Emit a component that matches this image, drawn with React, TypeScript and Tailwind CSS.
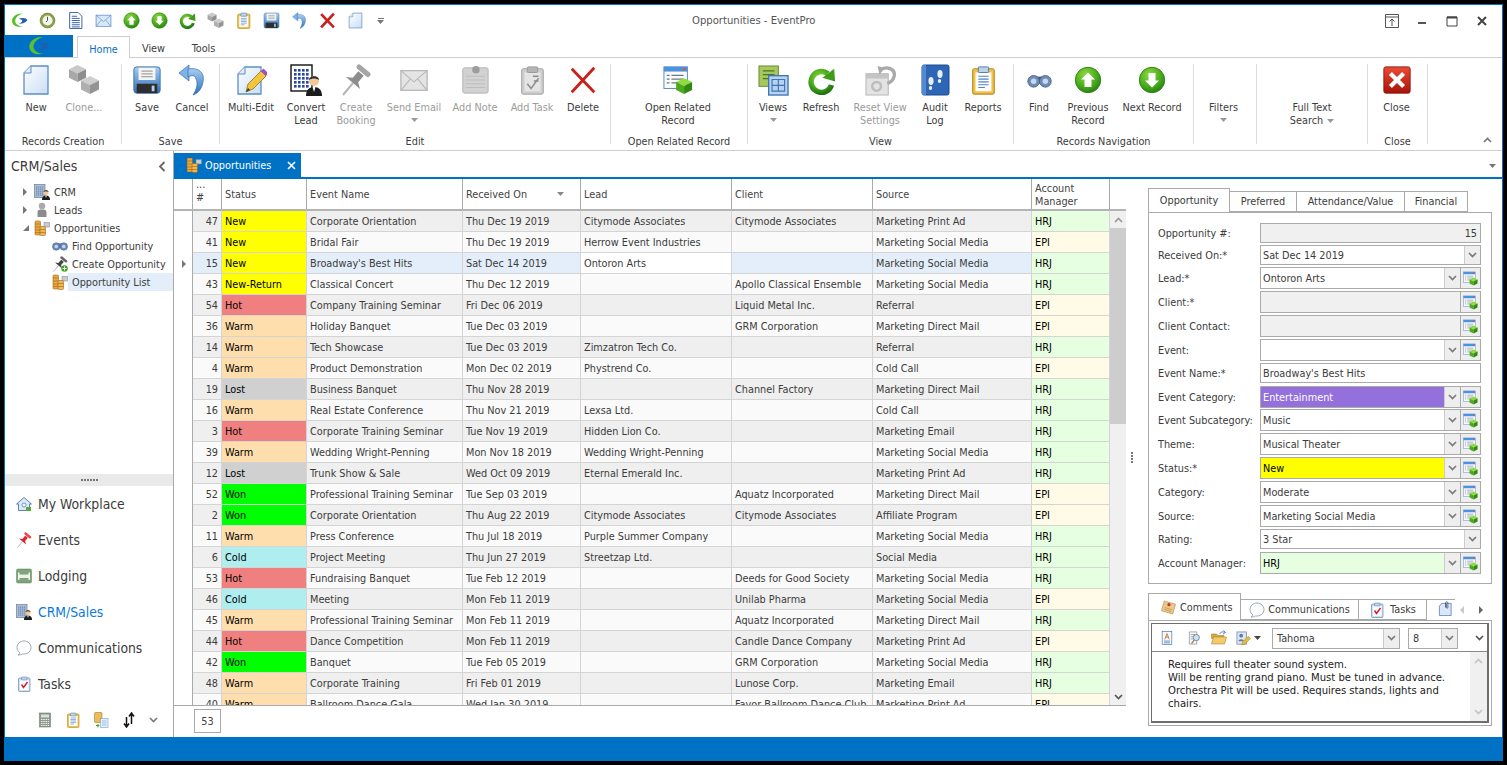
import React from "react";

type IP = { s?: number };
const Ic = ({ s = 32, children }: { s?: number; children: React.ReactNode }) => (
  <svg width={s} height={s} viewBox="0 0 32 32" className="block shrink-0">
    {children}
  </svg>
);

const Cube = ({ x, y, w, c }: { x: number; y: number; w: number; c: string[] }) => (
  <g>
    <polygon points={`${x + w / 2},${y} ${x + w},${y + w / 4} ${x + w / 2},${y + w / 2} ${x},${y + w / 4}`} fill={c[0]} />
    <polygon points={`${x},${y + w / 4} ${x + w / 2},${y + w / 2} ${x + w / 2},${y + w} ${x},${y + (3 * w) / 4}`} fill={c[1]} />
    <polygon points={`${x + w},${y + w / 4} ${x + w / 2},${y + w / 2} ${x + w / 2},${y + w} ${x + w},${y + (3 * w) / 4}`} fill={c[2]} />
  </g>
);

const Defs = () => (
  <svg width="0" height="0" className="absolute">
    <defs>
      <linearGradient id="pg" x1="0" y1="0" x2="1" y2="1">
        <stop offset="0" stopColor="#ffffff" />
        <stop offset="1" stopColor="#c9ddf5" />
      </linearGradient>
      <radialGradient id="grn" cx="0.4" cy="0.3" r="0.8">
        <stop offset="0" stopColor="#8fdc3c" />
        <stop offset="0.6" stopColor="#46a81c" />
        <stop offset="1" stopColor="#1f7410" />
      </radialGradient>
      <linearGradient id="blu" x1="0" y1="0" x2="0" y2="1">
        <stop offset="0" stopColor="#a9cdf2" />
        <stop offset="1" stopColor="#2f6fb8" />
      </linearGradient>
      <linearGradient id="redb" x1="0" y1="0" x2="0" y2="1">
        <stop offset="0" stopColor="#ee4a35" />
        <stop offset="1" stopColor="#a51408" />
      </linearGradient>
    </defs>
  </svg>
);

const Page = ({ s }: IP) => (
  <Ic s={s}>
    <path d="M11 2h17v28H4V9z" fill="url(#pg)" stroke="#5b8ec4" strokeWidth="1.3" />
    <path d="M11 2v7H4" fill="#e4eefa" stroke="#5b8ec4" strokeWidth="1" />
  </Ic>
);
const Cubes = ({ s }: IP) => (
  <Ic s={s}>
    <Cube x={1} y={1} w={17} c={["#c9c9c9", "#a8a8a8", "#8e8e8e"]} />
    <Cube x={13} y={12} w={18} c={["#cfcfcf", "#b0b0b0", "#949494"]} />
  </Ic>
);
const Floppy = ({ s }: IP) => (
  <Ic s={s}>
    <rect x="2" y="2" width="28" height="28" rx="3" fill="url(#blu)" stroke="#3a6ea8" />
    <rect x="7" y="3" width="18" height="13" fill="#f4f4f4" />
    <path d="M10 6.5h12M10 9.5h12M10 12.5h12" stroke="#888" />
    <rect x="5" y="20" width="22" height="10" fill="#2e2e2e" />
    <rect x="21" y="22" width="3" height="6" fill="#b8cfe8" />
  </Ic>
);
const Undo = ({ s }: IP) => (
  <Ic s={s}>
    <polygon points="3,9 13,1 13,17" fill="#7fb2e6" stroke="#2f6fb8" strokeWidth="0.7" />
    <path d="M12 5C23 3 29 9 27 18C26 24 23 29 17 31C21 25 22 19 20 15C19 11 16 11 12 13Z" fill="url(#blu)" stroke="#2f6fb8" strokeWidth="0.7" />
  </Ic>
);
const RedX = ({ s, w = 3 }: IP & { w?: number }) => (
  <Ic s={s}>
    <path d="M4 4L28 29M28 3L4 29" stroke="#cb1f1a" strokeWidth={w} />
  </Ic>
);
const GreenArrow = ({ s, down }: IP & { down?: boolean }) => (
  <Ic s={s}>
    <circle cx="16" cy="16" r="14.5" fill="url(#grn)" stroke="#2a7a12" />
    <path d="M16 7.5L24 15.5H20V24H12V15.5H8Z" fill="#fff" transform={down ? "rotate(180 16 16)" : undefined} />
  </Ic>
);
const Refresh = ({ s }: IP) => (
  <Ic s={s}>
    <path d="M23 8.5A11.5 11.5 0 1 0 27 21" fill="none" stroke="url(#grn)" strokeWidth="6" />
    <polygon points="17,13 31,17 30,3" fill="#3f9c18" />
  </Ic>
);
const Binoculars = ({ s }: IP) => (
  <Ic s={s}>
    <rect x="11" y="11" width="10" height="9" fill="#4d5d78" />
    <circle cx="8.5" cy="17" r="7.5" fill="#6d8cb8" stroke="#47597a" />
    <circle cx="23.5" cy="17" r="7.5" fill="#6d8cb8" stroke="#47597a" />
    <circle cx="8.5" cy="17" r="3.5" fill="#c6d8ef" />
    <circle cx="23.5" cy="17" r="3.5" fill="#c6d8ef" />
  </Ic>
);
const Envelope = ({ s, gray }: IP & { gray?: boolean }) => {
  const f = gray ? "#e4e4e4" : "#d8e8fa";
  const l = gray ? "#b8b8b8" : "#5b8ec4";
  return (
    <Ic s={s}>
      <rect x="2" y="6" width="28" height="21" fill={f} stroke={l} strokeWidth="1.4" />
      <path d="M2 6L16 18L30 6M2 27L12 15M30 27L20 15" fill="none" stroke={l} strokeWidth="1.2" />
    </Ic>
  );
};
const Pin = ({ s, red, plus }: IP & { red?: boolean; plus?: boolean }) => {
  const c = red ? "#d8262a" : plus ? "#444444" : "#8d8d8d";
  return (
    <Ic s={s}>
      <path d="M3 31L13 19" stroke="#b5b5b5" strokeWidth="2" />
      <path d="M6 13L20 25L18.2 18.2L23.7 11.7L18.3 7.3L12.8 13.8Z" fill={c} />
      <path d="M19 3L28 10.5" stroke={red ? "#f04848" : plus ? "#666666" : "#a5a5a5"} strokeWidth="5" strokeLinecap="round" />
      {plus && <circle cx="25" cy="25" r="6.5" fill="#3da51c" />}
      {plus && <path d="M25 21v8M21 25h8" stroke="#fff" strokeWidth="2" />}
    </Ic>
  );
};
const GrayNote = ({ s }: IP) => (
  <Ic s={s}>
    <rect x="3" y="3" width="27" height="27" rx="2" fill="#d2d2d2" stroke="#b2b2b2" />
    <path d="M6 12h21M6 16h21M6 20h21M6 24h21" stroke="#bdbdbd" />
    <circle cx="17" cy="5" r="4" fill="#9d9d9d" />
  </Ic>
);
const Clipboard = ({ s, mode }: IP & { mode: "gray" | "gold" | "red" | "plain" }) => {
  const b = mode === "gray" ? "#a9a9a9" : mode === "red" ? "#4d78a8" : "#b98a1c";
  const lines = mode === "gray" ? "#999" : "#4f86c6";
  return (
    <Ic s={s}>
      <rect x="5" y="4" width="23" height="27" rx="2" fill={mode === "gray" ? "#cfcfcf" : mode === "red" ? "#cfe0f2" : "#f0c24a"} stroke={b} strokeWidth="1.2" />
      <rect x="8" y="8" width="17" height="20" fill={mode === "gray" ? "#e5e5e5" : "#fdfdfd"} />
      <rect x="11" y="2" width="11" height="6" rx="1" fill={mode === "gray" ? "#b5b5b5" : "#b9d3ee"} stroke={mode === "gray" ? "#999" : "#4f79a8"} />
      {mode === "red" ? (
        <path d="M11 17L15 23L23 12" fill="none" stroke="#d0202a" strokeWidth="3" />
      ) : mode === "gray" ? (
        <path d="M11 20L15 25L23 14M17 12h6M18 17h5" fill="none" stroke="#8c8c8c" strokeWidth="1.6" />
      ) : (
        <path d="M11 12h11M11 15h11M11 18h11M11 21h11M11 24h7" stroke={lines} strokeWidth="1.2" />
      )}
    </Ic>
  );
};
const OpenRel = ({ s }: IP) => (
  <Ic s={s}>
    <rect x="1" y="2" width="25" height="23" fill="#fbfbfb" stroke="#4f86c6" />
    <rect x="1" y="2" width="25" height="5" fill="#4f92dc" />
    <rect x="21" y="3.5" width="3" height="2" fill="#e04b4b" />
    <path d="M4 11h3M9 11h13M4 15h3M9 15h13M4 19h3M9 19h10" stroke="#6a7a8c" strokeWidth="1.2" />
    <Cube x={14} y={14} w={17} c={["#8fdc3c", "#4fa81c", "#2f8a12"]} />
  </Ic>
);
const Views = ({ s }: IP) => (
  <Ic s={s}>
    <rect x="1" y="1" width="20" height="21" fill="#a5c95c" stroke="#6a8a32" />
    <path d="M5 6h12M5 10h12M5 14h12" stroke="#55702a" strokeWidth="1.4" />
    <rect x="11" y="11" width="20" height="20" fill="#b7d3f1" stroke="#3f74b5" strokeWidth="1.4" />
    <path d="M14.5 15h13v12h-13zM14.5 21h13M21 15v12" fill="none" stroke="#3f74b5" strokeWidth="1.2" />
  </Ic>
);
const ResetView = ({ s }: IP) => (
  <Ic s={s}>
    <rect x="1" y="9" width="23" height="22" fill="#e3e3e3" stroke="#b5b5b5" />
    <rect x="1" y="9" width="23" height="5" fill="#c4c4c4" />
    <circle cx="12" cy="22" r="4.5" fill="none" stroke="#bdbdbd" strokeWidth="2.6" />
    <path d="M15 6C22 0 32 4 30 12C29 16 26 18 23 19" fill="none" stroke="#a9a9a9" strokeWidth="3.4" />
    <polygon points="13,1 20,3 15,10" fill="#a9a9a9" />
  </Ic>
);
const Audit = ({ s }: IP) => (
  <Ic s={s}>
    <rect x="3" y="1" width="27" height="30" rx="2" fill="#2c66b5" stroke="#1d4d8f" />
    <rect x="3" y="1" width="4" height="30" fill="#5489cf" />
    <ellipse cx="12" cy="17" rx="2.6" ry="4" fill="#e8eef6" />
    <ellipse cx="11.5" cy="24" rx="1.7" ry="2" fill="#e8eef6" />
    <ellipse cx="21" cy="10" rx="2.6" ry="4" fill="#e8eef6" />
    <ellipse cx="20.5" cy="17" rx="1.7" ry="2" fill="#e8eef6" />
  </Ic>
);
const CloseBtn = ({ s }: IP) => (
  <Ic s={s}>
    <rect x="2" y="2" width="28" height="28" rx="2" fill="url(#redb)" stroke="#8f140a" />
    <path d="M9 9L23 23M23 9L9 23" stroke="#fff" strokeWidth="4.5" />
  </Ic>
);
const MultiEdit = ({ s }: IP) => (
  <Ic s={s}>
    <path d="M10 3h16v27H3V10z" fill="url(#pg)" stroke="#5b8ec4" strokeWidth="1.3" />
    <path d="M10 3v7H3" fill="#e4eefa" stroke="#5b8ec4" />
    <path d="M11 28L13 20L26 7L31 12L18 25Z" fill="#f1c63c" stroke="#7a6420" strokeWidth="0.7" />
    <path d="M26 7L28.5 4.5L33 9L31 12Z" fill="#a64bc4" />
    <path d="M11 28L13 24L15 26Z" fill="#333" />
  </Ic>
);
const BuildingPerson = ({ s, dark }: IP & { dark?: boolean }) => (
  <Ic s={s}>
    <rect x="1" y="1" width="21" height="26" fill={dark ? "#fff" : "#aebfd6"} stroke={dark ? "#111" : "#6c7c94"} strokeWidth="1.4" />
    {[4, 8, 12, 16].map((x) =>
      [5, 9, 13, 17, 21].map((y) => <rect key={x * 100 + y} x={x} y={y} width="2.6" height="2.6" fill={dark ? "#2747a8" : "#6f8ab5"} />)
    )}
    <circle cx="24" cy="17" r="5" fill="#f3c79a" />
    <path d="M19 16C19 11 29 11 29 16C26 14 22 14 19 16Z" fill="#2a2a2a" />
    <path d="M16 32C16 25 20 23 24 23C28 23 32 25 32 32Z" fill="#1c1c1c" />
    <path d="M22.5 23L24 28L25.5 23Z" fill="#fff" />
  </Ic>
);
const Person = ({ s }: IP) => (
  <Ic s={s}>
    <circle cx="16" cy="8" r="6.5" fill="#a9a9a9" />
    <path d="M7 30V20C7 16 11 15 16 15C21 15 25 16 25 20V30Z" fill="#8b8b8b" />
  </Ic>
);
const Coins = ({ s }: IP) => (
  <Ic s={s}>
    <rect x="20" y="5" width="11" height="9" fill="#c8ccd2" stroke="#7a7e88" />
    <rect x="2" y="2" width="11" height="28" rx="2" fill="#eda83c" stroke="#8d5a14" />
    <path d="M2 8h11M2 14h11M2 20h11M2 25h11" stroke="#8d5a14" />
    <rect x="12" y="13" width="11" height="18" rx="2" fill="#f1b64c" stroke="#8d5a14" />
    <path d="M12 19h11M12 25h11" stroke="#8d5a14" />
  </Ic>
);
const House = ({ s }: IP) => (
  <Ic s={s}>
    <path d="M16 3L31 16H27V29H5V16H1Z" fill="#dce9f7" stroke="#4a78ae" strokeWidth="1.8" />
    <rect x="12" y="14" width="8" height="8" rx="4" fill="#fff" stroke="#4a78ae" strokeWidth="1.5" />
    <rect x="20" y="22" width="10" height="8" fill="#5aa83a" />
  </Ic>
);
const Bed = ({ s }: IP) => (
  <Ic s={s}>
    <rect x="1" y="2" width="30" height="28" rx="3" fill="#7fa37a" stroke="#5b7d58" />
    <rect x="6" y="13" width="20" height="7" fill="#eef2ea" />
    <rect x="4" y="9" width="3" height="15" fill="#eef2ea" />
    <rect x="25" y="9" width="3" height="15" fill="#eef2ea" />
  </Ic>
);
const Bubble = ({ s }: IP) => (
  <Ic s={s}>
    <path d="M16 2C8 2 2 8 2 15C2 20 5 24 8 26C7 28 6 29 4 30C8 30 11 29 13 28C14 28 15 28 16 28C24 28 30 22 30 15C30 8 24 2 16 2Z" fill="#fff" stroke="#7d8ea2" strokeWidth="1.5" />
  </Ic>
);
const Clock = ({ s }: IP) => (
  <Ic s={s}>
    <circle cx="16" cy="16" r="14" fill="#8aa04c" stroke="#5c6f2c" />
    <circle cx="16" cy="16" r="9.5" fill="#f4f4ea" />
    <path d="M16 9v7l-3 3" fill="none" stroke="#333" strokeWidth="1.6" />
  </Ic>
);
const DocLines = ({ s }: IP) => (
  <Ic s={s}>
    <path d="M5 1h16l7 7v23H5z" fill="#fff" stroke="#1f4d96" strokeWidth="1.6" />
    <path d="M9 8h10M9 12h15M9 16h15M9 20h15M9 24h15M9 28h15" stroke="#1f4d96" strokeWidth="1.6" />
  </Ic>
);
const EPLogo = ({ s }: IP) => (
  <Ic s={s}>
    <path d="M21 3C10 2 1 10 2 18C3 26 13 30 22 27C15 27 8 23 8 17C8 11 14 6 21 3Z" fill="#5cc02c" />
    <path d="M14 13C20 10 29 11 31 15C28 20 21 23 14 22C19 21 22 18 21 15C19 14 16 13 14 13Z" fill="#1f5fae" />
  </Ic>
);
const Calc = ({ s }: IP) => (
  <Ic s={s}>
    <rect x="5" y="2" width="22" height="28" fill="#8f9a8f" stroke="#5f6a5f" />
    <rect x="8" y="5" width="16" height="6" fill="#d9e2d9" />
    <path d="M8 15h16M8 19h16M8 23h16M8 27h16" stroke="#eee" strokeWidth="2" strokeDasharray="3 1.5" />
  </Ic>
);
const CopyDoc = ({ s }: IP) => (
  <Ic s={s}>
    <rect x="3" y="1" width="15" height="20" rx="2" fill="#eebb58" stroke="#8d6a20" />
    <rect x="15" y="13" width="15" height="18" fill="#e6f0fb" stroke="#5b8ec4" />
    <path d="M18 18h9M18 22h9M18 26h9" stroke="#5b8ec4" />
    <path d="M6 27h7M10 24v7" stroke="#3da51c" strokeWidth="2" />
  </Ic>
);
const SortArrows = ({ s }: IP) => (
  <Ic s={s}>
    <path d="M11 10V28M6 23L11 30L16 23M21 24V4M16 9L21 2L26 9" fill="none" stroke="#111" strokeWidth="3" />
  </Ic>
);
const FontDoc = ({ s }: IP) => (
  <Ic s={s}>
    <rect x="5" y="1" width="22" height="30" fill="#f5f8fc" stroke="#4f79b8" strokeWidth="1.6" />
    <path d="M11 19L16 6L21 19M13 14h6" fill="none" stroke="#c8702a" strokeWidth="2" />
    <path d="M9 23h14M9 27h14" stroke="#4f79b8" strokeWidth="1.8" />
  </Ic>
);
const DocSearch = ({ s }: IP) => (
  <Ic s={s}>
    <path d="M3 2h17v28H3z" fill="#f7f7f7" stroke="#7b8a9c" strokeWidth="1.5" />
    <path d="M6 8h10M6 13h6M6 18h6" stroke="#7b8a9c" strokeWidth="1.5" />
    <circle cx="19" cy="15" r="7" fill="#cfe3f7" stroke="#6a7a8c" strokeWidth="2" />
    <path d="M14 21L8 29" stroke="#a87a3c" strokeWidth="3" />
  </Ic>
);
const Folder = ({ s }: IP) => (
  <Ic s={s}>
    <path d="M1 8h10l3 3h12v6H1z" fill="#d9a640" stroke="#9a7420" />
    <path d="M1 28L5 14H31L27 28Z" fill="#f3cb6a" stroke="#9a7420" />
    <path d="M17 8C20 3 25 3 28 5M25 1L29 5L24 8" fill="none" stroke="#4f86c6" strokeWidth="2" />
  </Ic>
);
const SigEdit = ({ s }: IP) => (
  <Ic s={s}>
    <rect x="2" y="2" width="20" height="26" fill="#dfe7f2" stroke="#6a7fa0" strokeWidth="1.5" />
    <circle cx="11" cy="10" r="4" fill="#5f7aa6" />
    <path d="M5 22C5 16 17 16 17 22Z" fill="#5f7aa6" />
    <path d="M12 30L14 23L26 11L31 16L19 28Z" fill="#e8b93a" stroke="#7a6420" strokeWidth="0.7" />
  </Ic>
);
const CommentNote = ({ s }: IP) => (
  <Ic s={s}>
    <path d="M7 2L31 9L25 30L1 23Z" fill="#e9c98c" stroke="#a9803c" strokeWidth="1.2" />
    <circle cx="17" cy="10" r="3.5" fill="#c8352c" />
    <path d="M8 16L24 21M7 20L22 25" stroke="#b08c4c" strokeWidth="1.4" />
  </Ic>
);
const Attach = ({ s }: IP) => (
  <Ic s={s}>
    <path d="M8 5h20v26H3V11z" fill="#d9e8f8" stroke="#4f79b8" strokeWidth="1.6" />
    <path d="M16 14V4C16 1 21 1 21 4V14C21 16 18 16 18 14V6" fill="none" stroke="#335" strokeWidth="1.4" />
  </Ic>
);

const Chev = ({ c = "#7a7a7a", up }: { c?: string; up?: boolean }) => (
  <svg width="9" height="6" viewBox="0 0 9 6" className={up ? "block rotate-180" : "block"}>
    <path d="M1 1L4.5 4.5L8 1" fill="none" stroke={c} strokeWidth="1.7" />
  </svg>
);
const Tri = ({ c = "#999" }: { c?: string }) => (
  <svg width="7" height="4" viewBox="0 0 7 4" className="block shrink-0">
    <path d="M0 0H7L3.5 4Z" fill={c} />
  </svg>
);

const qat = [
  <EPLogo s={17} />, <Clock s={17} />, <DocLines s={17} />, <Envelope s={17} />, <GreenArrow s={17} />, <GreenArrow s={17} down />,
  <Refresh s={17} />, <Cubes s={17} />, <Clipboard s={17} mode="gold" />, <Floppy s={17} />, <Undo s={17} />, <RedX s={17} w={5} />, <Page s={17} />,
];

type Btn = { w: number; icon?: React.ReactNode; l: string; l2?: string; dis?: boolean; arrow?: boolean; inlineArrow?: boolean };
type Group = { w: number; pl: number; label?: string; btns: Btn[] };
const groups: Group[] = [
  { w: 117, pl: 7, label: "Records Creation", btns: [
    { w: 48, icon: <Page />, l: "New" },
    { w: 48, icon: <Cubes />, l: "Clone...", dis: true },
  ] },
  { w: 98, pl: 3, label: "Save", btns: [
    { w: 44, icon: <Floppy s={30} />, l: "Save" },
    { w: 46, icon: <Undo />, l: "Cancel" },
  ] },
  { w: 391, pl: 4, label: "Edit", btns: [
    { w: 54, icon: <MultiEdit />, l: "Multi-Edit" },
    { w: 56, icon: <BuildingPerson dark />, l: "Convert", l2: "Lead" },
    { w: 44, icon: <Pin />, l: "Create", l2: "Booking", dis: true },
    { w: 72, icon: <Envelope gray s={30} />, l: "Send Email", dis: true, arrow: true },
    { w: 50, icon: <GrayNote s={30} />, l: "Add Note", dis: true },
    { w: 64, icon: <Clipboard mode="gray" s={30} />, l: "Add Task", dis: true },
    { w: 38, icon: <RedX s={30} />, l: "Delete" },
  ] },
  { w: 137, pl: 0, label: "Open Related Record", btns: [{ w: 134, icon: <OpenRel s={30} />, l: "Open Related", l2: "Record" }] },
  { w: 266, pl: 0, label: "View", btns: [
    { w: 50, icon: <Views s={31} />, l: "Views", arrow: true },
    { w: 46, icon: <Refresh s={29} />, l: "Refresh" },
    { w: 72, icon: <ResetView s={31} />, l: "Reset View", l2: "Settings", dis: true },
    { w: 38, icon: <Audit />, l: "Audit", l2: "Log" },
    { w: 58, icon: <Clipboard mode="plain" s={30} />, l: "Reports" },
  ] },
  { w: 180, pl: 0, label: "Records Navigation", btns: [
    { w: 50, icon: <Binoculars s={25} />, l: "Find" },
    { w: 48, icon: <GreenArrow s={28} />, l: "Previous", l2: "Record" },
    { w: 80, icon: <GreenArrow s={28} down />, l: "Next Record" },
  ] },
  { w: 63, pl: 0, btns: [{ w: 59, l: "Filters", arrow: true }] },
  { w: 111, pl: 0, btns: [{ w: 110, l: "Full Text", l2: "Search", inlineArrow: true }] },
  { w: 60, pl: 0, label: "Close", btns: [{ w: 57, icon: <CloseBtn s={30} />, l: "Close" }] },
];

type Row = [number, string, string, string, string, string, string, string];
const rows: Row[] = [
  [47, "New", "Corporate Orientation", "Thu Dec 19 2019", "Citymode Associates", "Citymode Associates", "Marketing Print Ad", "HRJ"],
  [41, "New", "Bridal Fair", "Thu Dec 19 2019", "Herrow Event Industries", "", "Marketing Social Media", "EPI"],
  [15, "New", "Broadway's Best Hits", "Sat Dec 14 2019", "Ontoron Arts", "", "Marketing Social Media", "HRJ"],
  [43, "New-Return", "Classical Concert", "Thu Dec 12 2019", "", "Apollo Classical Ensemble", "Marketing Social Media", "HRJ"],
  [54, "Hot", "Company Training Seminar", "Fri Dec 06 2019", "", "Liquid Metal Inc.", "Referral", "EPI"],
  [36, "Warm", "Holiday Banquet", "Tue Dec 03 2019", "", "GRM Corporation", "Marketing Direct Mail", "EPI"],
  [14, "Warm", "Tech Showcase", "Tue Dec 03 2019", "Zimzatron Tech Co.", "", "Referral", "HRJ"],
  [4, "Warm", "Product Demonstration", "Mon Dec 02 2019", "Phystrend Co.", "", "Cold Call", "EPI"],
  [19, "Lost", "Business Banquet", "Thu Nov 28 2019", "", "Channel Factory", "Marketing Direct Mail", "HRJ"],
  [16, "Warm", "Real Estate Conference", "Thu Nov 21 2019", "Lexsa Ltd.", "", "Cold Call", "HRJ"],
  [3, "Hot", "Corporate Training Seminar", "Tue Nov 19 2019", "Hidden Lion Co.", "", "Marketing Email", "HRJ"],
  [39, "Warm", "Wedding Wright-Penning", "Mon Nov 18 2019", "Wedding Wright-Penning", "", "Marketing Social Media", "HRJ"],
  [12, "Lost", "Trunk Show & Sale", "Wed Oct 09 2019", "Eternal Emerald Inc.", "", "Marketing Print Ad", "HRJ"],
  [52, "Won", "Professional Training Seminar", "Tue Sep 03 2019", "", "Aquatz Incorporated", "Marketing Direct Mail", "EPI"],
  [2, "Won", "Corporate Orientation", "Thu Aug 22 2019", "Citymode Associates", "Citymode Associates", "Affiliate Program", "EPI"],
  [11, "Warm", "Press Conference", "Thu Jul 18 2019", "Purple Summer Company", "", "Marketing Social Media", "HRJ"],
  [6, "Cold", "Project Meeting", "Thu Jun 27 2019", "Streetzap Ltd.", "", "Social Media", "HRJ"],
  [53, "Hot", "Fundraising Banquet", "Tue Feb 12 2019", "", "Deeds for Good Society", "Marketing Social Media", "HRJ"],
  [46, "Cold", "Meeting", "Mon Feb 11 2019", "", "Unilab Pharma", "Marketing Social Media", "EPI"],
  [45, "Warm", "Professional Training Seminar", "Mon Feb 11 2019", "", "Aquatz Incorporated", "Marketing Direct Mail", "HRJ"],
  [44, "Hot", "Dance Competition", "Mon Feb 11 2019", "", "Candle Dance Company", "Marketing Print Ad", "EPI"],
  [42, "Won", "Banquet", "Tue Feb 05 2019", "", "GRM Corporation", "Marketing Social Media", "HRJ"],
  [48, "Warm", "Corporate Training", "Fri Feb 01 2019", "", "Lunose Corp.", "Marketing Email", "HRJ"],
  [40, "Warm", "Ballroom Dance Gala", "Wed Jan 30 2019", "", "Favor Ballroom Dance Club", "Marketing Print Ad", "EPI"],
];

const statusBg: Record<string, string> = {
  New: "bg-[#ffff00]",
  "New-Return": "bg-[#ffff00]",
  Hot: "bg-[#f08080]",
  Warm: "bg-[#ffdead]",
  Lost: "bg-[#d0d0d0]",
  Won: "bg-[#00ff00]",
  Cold: "bg-[#afeeee]",
};

const Cell = ({ w, className = "", children }: { w: string; className?: string; children?: React.ReactNode }) => (
  <div className={`${w} shrink-0 h-full border-r border-[#d4d4d4] pl-[3px] flex items-center whitespace-nowrap overflow-hidden ${className}`}>{children}</div>
);

const Grid = () => (
  <div className="h-[527px] flex flex-col border-b border-[#aaaaaa]">
    <div className="flex h-[32px] shrink-0 border-b-2 border-[#b4b4b4] text-[#444444]">
      <div className="w-[19px] border-r border-[#aaaaaa]" />
      <div className="w-[29px] border-r border-[#aaaaaa] pl-[3px] pt-[3px] leading-[12px]">
        <div className="h-[10px] leading-[6px]">...</div>
        <div>#</div>
      </div>
      <div className="w-[85px] border-r border-[#aaaaaa] pl-[3px] flex items-center">Status</div>
      <div className="w-[156px] border-r border-[#aaaaaa] pl-[3px] flex items-center">Event Name</div>
      <div className="w-[118px] border-r border-[#aaaaaa] pl-[3px] pr-[16px] flex items-center justify-between">
        Received On
        <Tri c="#888888" />
      </div>
      <div className="w-[151px] border-r border-[#aaaaaa] pl-[3px] flex items-center">Lead</div>
      <div className="w-[141px] border-r border-[#aaaaaa] pl-[3px] flex items-center">Client</div>
      <div className="w-[159px] border-r border-[#aaaaaa] pl-[3px] flex items-center">Source</div>
      <div className="w-[78px] border-r border-[#aaaaaa] pl-[3px] pt-[2px] flex items-center leading-[13px]">
        Account
        <br />
        Manager
      </div>
    </div>
    <div className="flex flex-1 min-h-0">
      <div className="w-[19px] border-r border-[#aaaaaa] shrink-0">
        {rows.map((r) => (
          <div key={r[0]} className="h-[21px] flex items-center pl-[8px]">
            {r[0] === 15 && <div className="w-0 h-0 border-y-[4px] border-y-transparent border-l-[4px] border-l-[#777777]" />}
          </div>
        ))}
      </div>
      <div className="w-[917px] shrink-0 overflow-hidden text-[#3c3c3c]">
        {rows.map((r, i) => {
          const sel = r[0] === 15;
          const bg = sel ? "bg-[#e3eefa]" : i % 2 === 0 ? "bg-[#efefef]" : "bg-[#fafafa]";
          return (
            <div key={r[0]} className={`flex h-[21px] border-b border-[#d4d4d4] ${bg}`}>
              <Cell w="w-[29px]" className="justify-end pr-[3px]">{r[0]}</Cell>
              <Cell w="w-[85px]" className={`${statusBg[r[1]]} text-black`}>{r[1]}</Cell>
              <Cell w="w-[156px]">{r[2]}</Cell>
              <Cell w="w-[118px]">{r[3]}</Cell>
              <Cell w="w-[151px]" className={sel ? "bg-white" : ""}>{r[4]}</Cell>
              <Cell w="w-[141px]">{r[5]}</Cell>
              <Cell w="w-[159px]">{r[6]}</Cell>
              <Cell w="w-[78px]" className={`${r[7] === "HRJ" ? "bg-[#e6ffe0]" : "bg-[#fffbe6]"} text-black`}>{r[7]}</Cell>
            </div>
          );
        })}
      </div>
      <div className="w-[16px] shrink-0 flex flex-col bg-[#f0f0f0]">
        <div className="h-[17px] flex items-center justify-center"><Chev c="#9a9a9a" up /></div>
        <div className="h-[196px] bg-[#cdcdcd]" />
        <div className="flex-1" />
        <div className="h-[17px] flex items-center justify-center"><Chev c="#555555" /></div>
      </div>
    </div>
  </div>
);

type Field = { label: string; row: string; box: string; value?: string; kind: "text" | "ro" | "date" | "combo" | "add"; right?: boolean; bg?: string };
const fields: Field[] = [
  { label: "Opportunity #:", row: "h-[22px]", box: "h-[20px]", value: "15", kind: "ro", right: true, bg: "bg-[#f0f0f0]" },
  { label: "Received On:*", row: "h-[22px]", box: "h-[20px]", value: "Sat Dec 14 2019", kind: "date" },
  { label: "Lead:*", row: "h-[24px]", box: "h-[22px]", value: "Ontoron Arts", kind: "combo" },
  { label: "Client:*", row: "h-[24px]", box: "h-[22px]", kind: "add", bg: "bg-[#f0f0f0]" },
  { label: "Client Contact:", row: "h-[24px]", box: "h-[22px]", kind: "add", bg: "bg-[#f0f0f0]" },
  { label: "Event:", row: "h-[24px]", box: "h-[22px]", kind: "combo" },
  { label: "Event Name:*", row: "h-[23px]", box: "h-[20px]", value: "Broadway's Best Hits", kind: "text" },
  { label: "Event Category:", row: "h-[23px]", box: "h-[22px]", value: "Entertainment", kind: "combo", bg: "bg-[#9370db] text-white" },
  { label: "Event Subcategory:", row: "h-[24px]", box: "h-[22px]", value: "Music", kind: "combo" },
  { label: "Theme:", row: "h-[24px]", box: "h-[22px]", value: "Musical Theater", kind: "combo" },
  { label: "Status:*", row: "h-[24px]", box: "h-[22px]", value: "New", kind: "combo", bg: "bg-[#ffff00] text-black" },
  { label: "Category:", row: "h-[24px]", box: "h-[22px]", value: "Moderate", kind: "combo" },
  { label: "Source:", row: "h-[24px]", box: "h-[22px]", value: "Marketing Social Media", kind: "combo" },
  { label: "Rating:", row: "h-[23px]", box: "h-[20px]", value: "3 Star", kind: "date" },
  { label: "Account Manager:", row: "h-[24px]", box: "h-[22px]", value: "HRJ", kind: "combo", bg: "bg-[#e6ffe0] text-black" },
];

const FormRow = ({ f }: { f: Field }) => (
  <div className={`${f.row} flex items-start`}>
    <div className={`${f.box} w-[102px] shrink-0 flex items-center whitespace-nowrap text-[#3c3c3c]`}>{f.label}</div>
    <div className={`${f.box} w-[221px] flex border border-[#aaaaaa] text-[#3c3c3c]`}>
      <div className={`flex-1 min-w-0 px-[2px] flex items-center whitespace-nowrap ${f.right ? "justify-end pr-[3px]" : ""} ${f.bg ?? "bg-white"}`}>
        {f.value}
      </div>
      {(f.kind === "combo" || f.kind === "date") && (
        <div className="w-[16px] bg-[#eeeeee] border-l border-[#cccccc] flex items-center justify-center"><Chev /></div>
      )}
      {(f.kind === "combo" || f.kind === "add") && (
        <div className="w-[20px] bg-[#eeeeee] border-l border-[#aaaaaa] flex items-center justify-center"><OpenRel s={15} /></div>
      )}
    </div>
  </div>
);

const TabBtn = ({ active, w, children }: { active?: boolean; w: string; children: React.ReactNode }) => (
  <div className={`${w} shrink-0 border border-[#aaaaaa] bg-white flex items-center justify-center text-[#3c3c3c] ${active ? "h-[24px] border-b-0 relative z-10" : "h-[21px] border-l-0"}`}>
    {children}
  </div>
);

const tree = [
  { t: "CRM", icon: <BuildingPerson s={16} />, lvl: 0, arrow: "closed" },
  { t: "Leads", icon: <Person s={16} />, lvl: 0, arrow: "closed" },
  { t: "Opportunities", icon: <Coins s={16} />, lvl: 0, arrow: "open" },
  { t: "Find Opportunity", icon: <Binoculars s={16} />, lvl: 1 },
  { t: "Create Opportunity", icon: <Pin s={16} plus />, lvl: 1 },
  { t: "Opportunity List", icon: <Coins s={16} />, lvl: 1, sel: true },
];

const nav = [
  { t: "My Workplace", icon: <House s={16} /> },
  { t: "Events", icon: <Pin s={16} red /> },
  { t: "Lodging", icon: <Bed s={16} /> },
  { t: "CRM/Sales", icon: <BuildingPerson s={16} />, on: true },
  { t: "Communications", icon: <Bubble s={16} /> },
  { t: "Tasks", icon: <Clipboard s={16} mode="red" /> },
];

const Sidebar = () => (
  <div className="w-[169px] shrink-0 border-r border-[#aaaaaa] flex flex-col">
    <div className="h-[32px] shrink-0 flex items-center justify-between pl-[6px] pr-[7px] pb-[2px] text-[14px] text-[#3c3c3c]">
      CRM/Sales
      <svg width="8" height="11" viewBox="0 0 8 11"><path d="M6.5 1L2 5.5L6.5 10" fill="none" stroke="#666" strokeWidth="1.8" /></svg>
    </div>
    <div className="flex-1 text-[#3c3c3c]">
      {tree.map((n) => (
        <div key={n.t} className={`h-[18px] flex items-center ${n.lvl ? "pl-[47px]" : "pl-[18px]"}`}>
          {n.lvl === 0 && (
            <div className="w-[11px] shrink-0">
              {n.arrow === "closed" ? (
                <div className="w-0 h-0 border-y-[4px] border-y-transparent border-l-[4px] border-l-[#777777]" />
              ) : (
                <div className="w-0 h-0 border-b-[6px] border-b-[#777777] border-l-[6px] border-l-transparent" />
              )}
            </div>
          )}
          {n.icon}
          <div className={`pl-[4px] h-full flex items-center flex-1 whitespace-nowrap ${n.sel ? "bg-[#e3eefa]" : ""}`}>{n.t}</div>
        </div>
      ))}
    </div>
    <div className="h-[12px] shrink-0 bg-[#e9e9e9] flex items-center justify-center gap-[1px]">
      {[0, 1, 2, 3, 4, 5].map((i) => (
        <div key={i} className="w-[2px] h-[2px] bg-[#777777]" />
      ))}
    </div>
    <div className="h-[216px] shrink-0">
      {nav.map((n) => (
        <div key={n.t} className={`h-[36px] flex items-center pl-[11px] gap-[6px] text-[13.8px] ${n.on ? "text-[#0a7ad8]" : "text-[#3c3c3c]"}`}>
          {n.icon}
          {n.t}
        </div>
      ))}
    </div>
    <div className="h-[35px] shrink-0 flex items-center pl-[32px]">
      <div className="w-[28px]"><Calc s={16} /></div>
      <div className="w-[28px]"><Clipboard s={16} mode="gold" /></div>
      <div className="w-[28px]"><CopyDoc s={16} /></div>
      <div className="w-[28px]"><SortArrows s={16} /></div>
      <Chev />
    </div>
  </div>
);

const Comments = () => (
  <div className="h-[106px] border border-[#aaaaaa] p-[2px]">
    <div className="h-full border-2 border-[#6e6e6e] border-t border-l flex flex-col">
      <div className="h-[28px] shrink-0 border-b border-[#8a8a8a] flex items-center pt-[1px]">
        <div className="w-[29px] pl-[8px]"><FontDoc s={14} /></div>
        <div className="w-[26px] pl-[7px]"><DocSearch s={14} /></div>
        <div className="w-[25px] pl-[4px]"><Folder s={16} /></div>
        <div className="w-[33px] pl-[4px] flex items-center gap-[3px]"><SigEdit s={15} /><Tri c="#444444" /></div>
        <div className="ml-[7px] w-[128px] h-[21px] border border-[#aaaaaa] flex text-[#3c3c3c]">
          <div className="flex-1 pl-[4px] flex items-center">Tahoma</div>
          <div className="w-[16px] bg-[#eeeeee] border-l border-[#cccccc] flex items-center justify-center"><Chev /></div>
        </div>
        <div className="ml-[8px] w-[50px] h-[21px] border border-[#aaaaaa] flex text-[#3c3c3c]">
          <div className="flex-1 pl-[4px] flex items-center">8</div>
          <div className="w-[16px] bg-[#eeeeee] border-l border-[#cccccc] flex items-center justify-center"><Chev /></div>
        </div>
        <div className="ml-auto pr-[3px]"><Chev c="#555555" /></div>
      </div>
      <div className="flex flex-1 min-h-0">
        <div className="flex-1 pl-[16px] pt-[6px] text-[11.2px] leading-[13px] text-[#222222]">
          Requires full theater sound system.
          <br />
          Will be renting grand piano. Must be tuned in advance.
          <br />
          Orchestra Pit will be used. Requires stands, lights and
          <br />
          chairs.
        </div>
        <div className="w-[17px] shrink-0 bg-[#f0f0f0] flex flex-col items-center justify-between py-[6px]">
          <Chev c="#c4c4c4" up />
          <Chev c="#c4c4c4" />
        </div>
      </div>
    </div>
  </div>
);

const RightPanel = () => (
  <div className="w-[344px] shrink-0 pt-[10px]">
    <div className="flex items-end h-[23px]">
      <TabBtn active w="w-[82px]">Opportunity</TabBtn>
      <TabBtn w="w-[67px]">Preferred</TabBtn>
      <TabBtn w="w-[108px]">Attendance/Value</TabBtn>
      <TabBtn w="w-[63px]">Financial</TabBtn>
    </div>
    <div className="h-[372px] border border-[#aaaaaa] pl-[9px] pt-[10px]">
      {fields.map((f) => (
        <FormRow key={f.label} f={f} />
      ))}
    </div>
    <div className="mt-[10px] flex items-end h-[26px]">
      <div className="w-[93px] h-[27px] shrink-0 border border-b-0 border-[#aaaaaa] bg-white flex items-center pl-[12px] gap-[4px] text-[#3c3c3c] relative z-10">
        <CommentNote s={15} />Comments
      </div>
      <TabBtn w="w-[118px]"><div className="flex items-center gap-[3px]"><Bubble s={16} />Communications</div></TabBtn>
      <TabBtn w="w-[68px]"><div className="flex items-center gap-[5px]"><Clipboard s={16} mode="red" />Tasks</div></TabBtn>
      <div className="w-[28px] h-[21px] border-t border-[#aaaaaa] pl-[11px] pt-[1px] overflow-hidden"><Attach s={15} /></div>
      <div className="ml-[5px] h-[21px] flex items-center gap-[15px]">
        <div className="w-0 h-0 border-y-[4px] border-y-transparent border-r-[4px] border-r-[#c8c8c8]" />
        <div className="w-0 h-0 border-y-[4px] border-y-transparent border-l-[4px] border-l-[#666666]" />
      </div>
    </div>
    <Comments />
  </div>
);

export default function App() {
  return (
    <div className="w-[1507px] h-[765px] overflow-hidden bg-black p-[4px] font-['DejaVu_Sans_Condensed','Noto_Sans',sans-serif] text-[10.8px] leading-[13px]">
      <Defs />
      <div className="h-full flex flex-col bg-white border border-b-0 border-[#0072c6]">
        {/* title bar */}
        <div className="h-[31px] shrink-0 flex items-center">
          <div className="w-[687px] shrink-0 flex items-center">
            {qat.map((ic, i) => (
              <div key={i} className="w-[28px] flex justify-center">{ic}</div>
            ))}
            <div className="ml-[8px] flex flex-col items-center gap-[1px]">
              <div className="w-[6px] h-[1px] bg-[#777777]" />
              <Tri c="#777777" />
            </div>
          </div>
          <div className="text-[#555555] text-[11.2px]">Opportunities - EventPro</div>
          <div className="ml-auto flex items-center pr-[13px] gap-[16px]">
            <svg width="14" height="14" viewBox="0 0 14 14"><path d="M.5.5h13v13H.5zM.5 3h13M7 12V5M4.5 7.5L7 5l2.5 2.5" fill="none" stroke="#555" /></svg>
            <svg width="14" height="14" viewBox="0 0 14 14"><path d="M3 9h8" stroke="#555" strokeWidth="2" /></svg>
            <svg width="14" height="14" viewBox="0 0 14 14"><path d="M2 3h10v9H2z" fill="none" stroke="#444" /><path d="M2 3.5h10" stroke="#444" strokeWidth="2" /></svg>
            <svg width="14" height="14" viewBox="0 0 14 14"><path d="M3 3l8 8M11 3l-8 8" stroke="#444" strokeWidth="2" /></svg>
          </div>
        </div>
        {/* ribbon tabs */}
        <div className="h-[22px] shrink-0 flex items-end border-b border-[#cfcfcf] text-[#3c3c3c]">
          <div className="w-[68px] h-[22px] bg-[#0072c6] flex items-center justify-center pb-[1px]"><EPLogo s={22} /></div>
          <div className="ml-[4px] w-[53px] h-[22px] pt-[3px] border border-b-0 border-[#cfcfcf] bg-white -mb-[1px] flex items-center justify-center text-[#0a6fc2] relative">Home</div>
          <div className="w-[47px] h-full pt-[3px] flex items-center justify-center">View</div>
          <div className="w-[53px] h-full pt-[3px] flex items-center justify-center">Tools</div>
        </div>
        {/* ribbon */}
        <div className="h-[93px] shrink-0 border-b border-[#cfcfcf] pt-[6px] flex">
          {groups.map((g, gi) => (
            <div key={gi} style={{ width: g.w, paddingLeft: g.pl }} className="h-[80px] shrink-0 border-r border-[#dcdcdc] flex flex-col">
              <div className="flex">
                {g.btns.map((b) => (
                  <div key={b.l} style={{ width: b.w }} className={`shrink-0 flex flex-col items-center text-center leading-[13px] ${b.dis ? "text-[#9b9b9b]" : "text-[#3c3c3c]"}`}>
                    <div className="h-[32px] flex items-center">{b.icon}</div>
                    <div className="mt-[5px] whitespace-nowrap">{b.l}</div>
                    {b.l2 && (
                      <div className="whitespace-nowrap flex items-center gap-[4px]">
                        {b.l2}
                        {b.inlineArrow && <Tri />}
                      </div>
                    )}
                    {b.arrow && <div className="mt-[4px]"><Tri /></div>}
                  </div>
                ))}
              </div>
              {g.label && <div className="mt-auto -mb-[4px] text-center text-[#3c3c3c] whitespace-nowrap" style={{ marginLeft: -g.pl }}>{g.label}</div>}
            </div>
          ))}
          <div className="ml-auto self-end pr-[10px] pb-[7px]"><Chev up c="#777777" /></div>
        </div>
        {/* main */}
        <div className="flex-1 min-h-0 flex">
          <Sidebar />
          <div className="flex-1 min-w-0 flex flex-col">
            <div className="h-[28px] shrink-0 border-b-2 border-[#0072c6] flex items-end justify-between">
              <div className="w-[127px] h-[24px] bg-[#0072c6] text-white flex items-center pl-[12px] gap-[3px]">
                <Coins s={16} />
                Opportunities
                <svg width="9" height="9" viewBox="0 0 9 9" className="ml-[13px]"><path d="M1 1l7 7M8 1l-7 7" stroke="#fff" strokeWidth="1.6" /></svg>
              </div>
              <div className="pr-[6px] pb-[9px]"><Tri c="#777777" /></div>
            </div>
            <div className="flex-1 min-h-0 flex">
              <div className="w-[952px] shrink-0 flex flex-col">
                <Grid />
                <div className="flex-1 pl-[20px] pt-[3px]">
                  <div className="w-[27px] h-[24px] border border-[#aaaaaa] flex items-center justify-center text-[#444444]">53</div>
                </div>
              </div>
              <div className="w-[22px] shrink-0 flex items-center pl-[5px] pb-[2px]">
                <div className="flex flex-col gap-[1px]">
                  {[0, 1, 2, 3].map((i) => (
                    <div key={i} className="w-[2px] h-[2px] bg-[#777777]" />
                  ))}
                </div>
              </div>
              <RightPanel />
            </div>
          </div>
        </div>
        <div className="h-[24px] shrink-0 bg-[#0072c6]" />
      </div>
    </div>
  );
}
